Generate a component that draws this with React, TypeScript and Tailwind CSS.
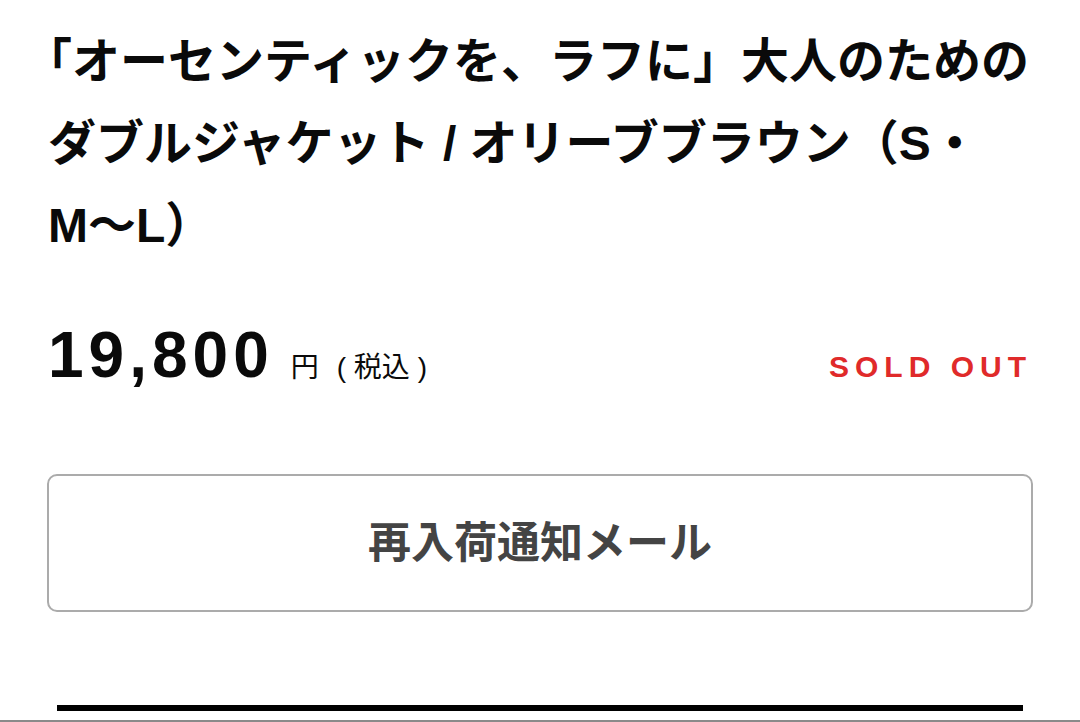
const jp = "font-['Liberation_Sans','Noto_Sans_CJK_JP',sans-serif]"

export default function App() {
  return (
    <div className={`flex h-[722px] w-[1080px] flex-col overflow-hidden bg-white ${jp}`}>
      <div className="px-[48px] pt-[21px]">
        <h1 className="whitespace-nowrap text-[48px] font-bold leading-[82px] text-[#0a0a0a] [text-spacing-trim:trim-start]">
          「オーセンティックを、ラフに」大人のための
          <br />
          ダブルジャケット / オリーブブラウン（S・
          <br />
          M～L）
        </h1>

        <div className="mt-[56px] flex items-baseline justify-between">
          <p className="flex items-baseline text-[#0a0a0a]">
            <span className="text-[64px] font-bold leading-none tracking-[5px]">19,800</span>
            <span className="ml-[17px] text-[28px] leading-none">円</span>
            <span className="ml-[18px] text-[28px] leading-none">
              ( 税込 )
            </span>
          </p>
          <p className="text-[30px] font-bold leading-none tracking-[6px] text-[#e02a2a]">SOLD OUT</p>
        </div>
      </div>

      <div className="mt-[87px] px-[47px]">
        <button
          type="button"
          className="flex h-[138px] w-full items-center justify-center rounded-[10px] border-2 border-[#ababab] bg-white text-[43px] font-bold text-[#444]"
        >
          再入荷通知メール
        </button>
      </div>

      <div className="mt-[93px] px-[57px]">
        <div className="h-[6px] w-full bg-black" />
      </div>

      <div className="mt-auto h-[2px] w-full bg-[#8a8a8a]" />
    </div>
  )
}
